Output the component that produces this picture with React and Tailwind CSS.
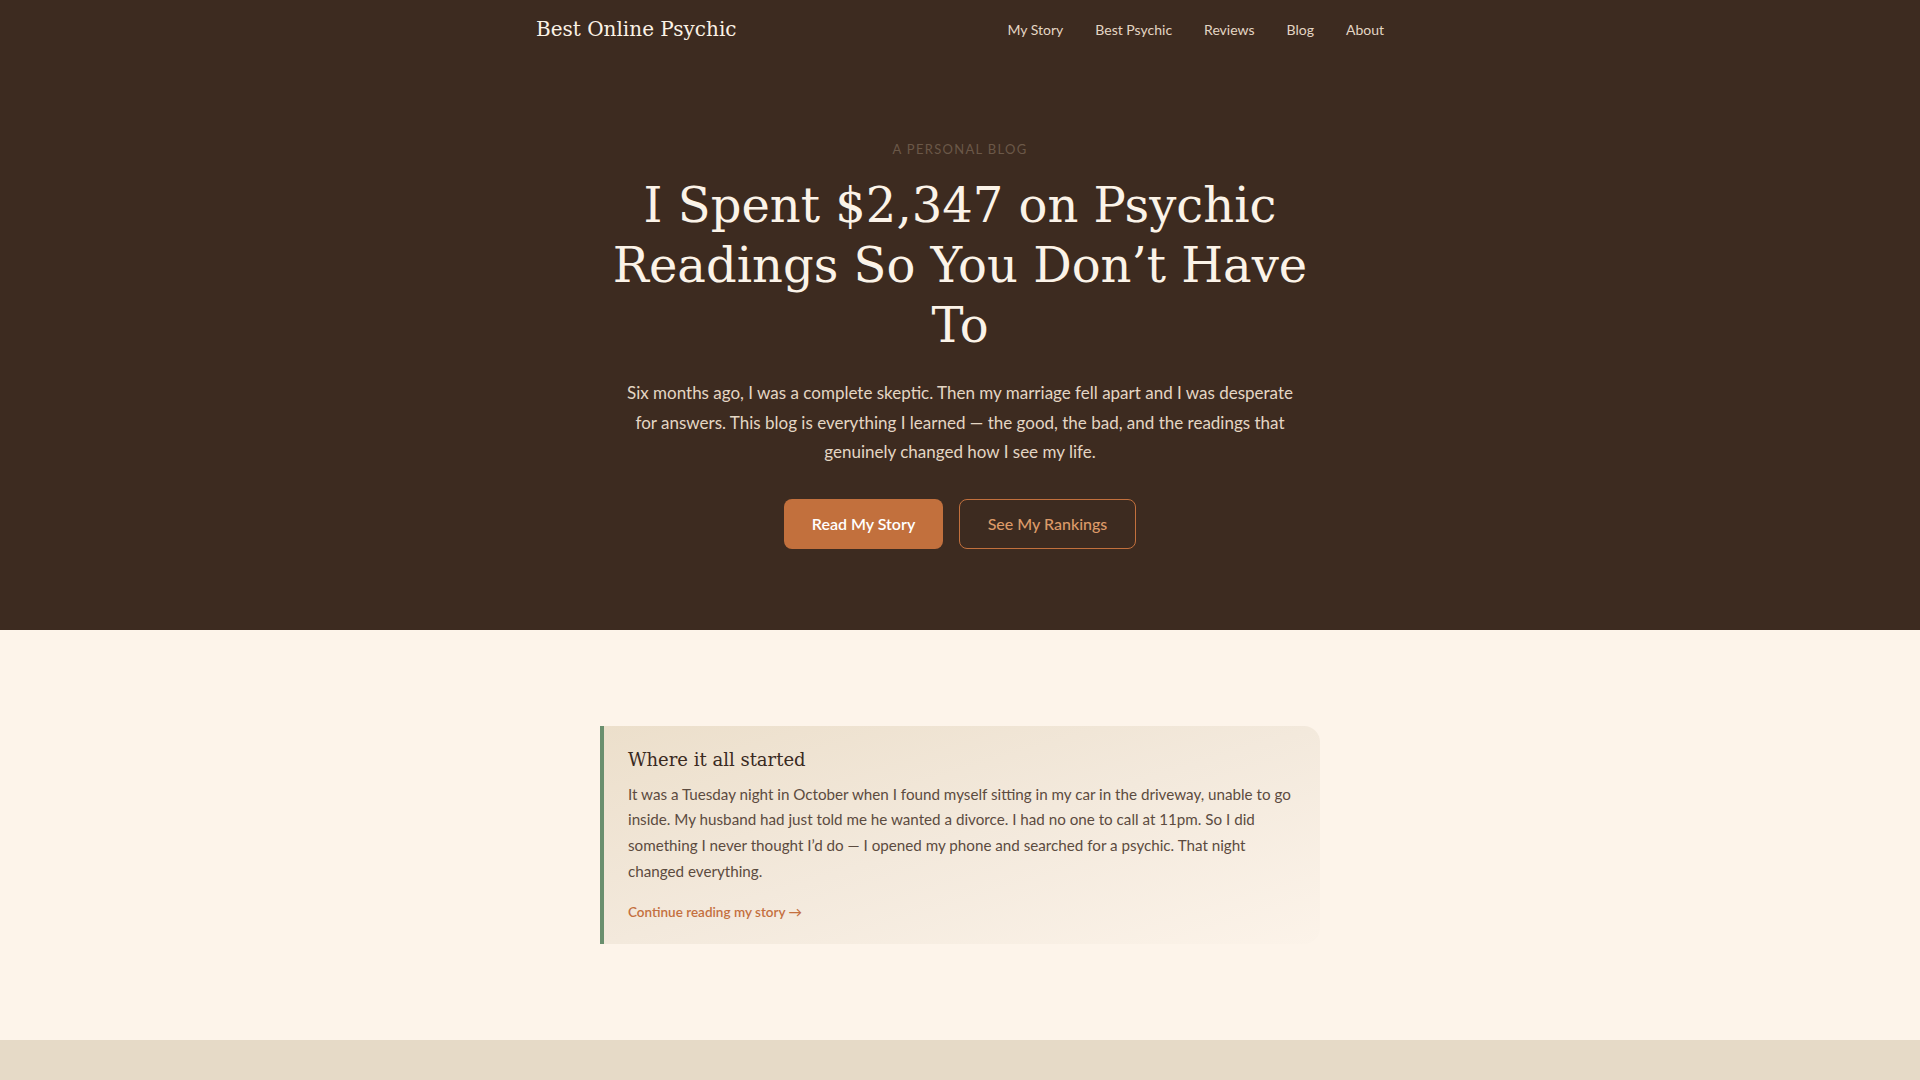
import React from 'react';

const serif = "font-['DejaVu_Serif','Liberation_Serif',serif]";

const navLinks = ['My Story', 'Best Psychic', 'Reviews', 'Blog', 'About'];

const Header = () => (
    <header className="h-[58px]">
        <div className="w-[848px] mx-auto h-full flex items-center justify-between">
            <a href="#" className={`${serif} text-[20px] text-[#fbf2e6]`}>Best Online Psychic</a>
            <nav className="flex items-center gap-8">
                {navLinks.map((link) => (
                    <a key={link} href="#" className="text-[14px] text-[#e4d6c4]">
                        {link}
                    </a>
                ))}
            </nav>
        </div>
    </header>
);

const Hero = () => (
    <section className="pt-[81px] pb-[81px] text-center">
        {/* small eyebrow above the title */}
        <p className="text-[13px] leading-5 tracking-[0.1em] uppercase text-[#6b5848]">A Personal Blog</p>
        <h1 className={`${serif} mt-4 mx-auto w-[720px] text-[48px] leading-[60px] text-[#fbf3e8]`}>
            I Spent $2,347 on Psychic Readings So You Don’t Have To
        </h1>
        <p className="mt-[23px] mx-auto w-[690px] text-[17px] leading-[29.5px] text-[#e4d6c4]">
            Six months ago, I was a complete skeptic. Then my marriage fell apart and I was desperate for answers. This blog is everything I learned — the good, the bad, and the readings that genuinely changed how I see my life.
        </p>
        <div className="mt-8 flex items-center justify-center gap-4">
            <a href="#" className="h-[50px] w-[159px] flex items-center justify-center rounded-lg bg-[#c2703d] text-[16px] font-semibold text-white">
                Read My Story
            </a>
            <a href="#" className="h-[50px] w-[177px] flex items-center justify-center rounded-lg border border-[#c2703d] text-[16px] font-medium text-[#dc9a68]">
                See My Rankings
            </a>
        </div>
    </section>
);

const StoryCard = () => (
    <div className="w-[720px] mx-auto border-l-4 border-[#6a8f6e] rounded-r-2xl bg-gradient-to-br from-[#ecdfcb] via-[#f3e9dc] to-[#fcf3e9] pl-6 pr-6 pt-[20px] pb-[21px]">
        <h2 className={`${serif} text-[18px] leading-7 text-[#3a2a1f]`}>Where it all started</h2>
        <p className="mt-[8px] text-[15.2px] leading-[25.7px] text-[#5c4b3f]">
            It was a Tuesday night in October when I found myself sitting in my car in the driveway, unable to go inside. My husband had just told me he wanted a divorce. I had no one to call at 11pm. So I did something I never thought I’d do — I opened my phone and searched for a psychic. That night changed everything.
        </p>
        <a href="#" className="inline-block mt-[18px] text-[13.5px] leading-5 font-semibold text-[#c4703f]">
            Continue reading my story →
        </a>
    </div>
);

export default function App() {
    return (
        <div className="min-h-screen bg-[#e6dac7] font-['Lato','Liberation_Sans',sans-serif]">
            <div className="bg-[#3d2b20]">
                <Header />
                <Hero />
            </div>
            <section className="bg-[#fdf4ea] py-24">
                <StoryCard />
            </section>
            <section className="bg-[#e6dac7] h-[200px]"></section>
        </div>
    );
}
